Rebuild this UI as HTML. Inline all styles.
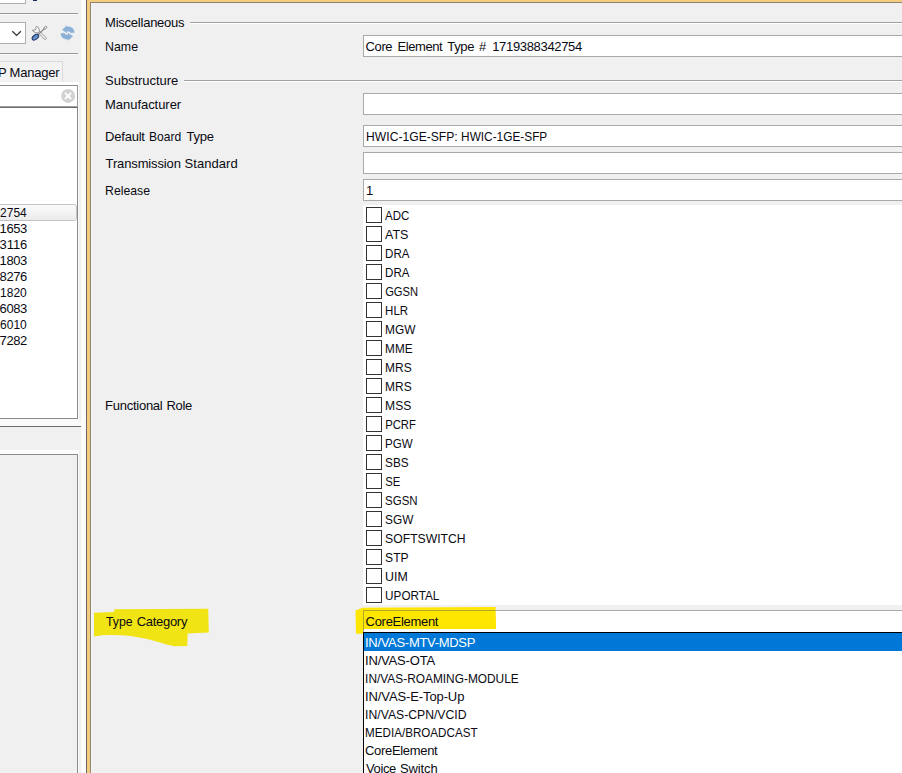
<!DOCTYPE html>
<html><head><meta charset="utf-8"><title>Core Element Type</title>
<style>
html,body{margin:0;padding:0;}
body{width:902px;height:773px;overflow:hidden;background:#f0f0f0;position:relative;font-family:"Liberation Sans",sans-serif;font-size:13px;color:#0a0a12;}
.a{position:absolute;}
.t{position:absolute;white-space:nowrap;line-height:16px;height:16px;}
.fld{position:absolute;left:363px;width:560px;height:20px;background:#fff;border:1px solid #a9a9a9;}
.hl{position:absolute;height:1px;background:#a0a0a0;}
.cb{position:absolute;left:366px;width:14px;height:14px;border:1px solid #333;background:#fff;}
</style></head><body>

<div class="a" style="left:0;top:0;width:26px;height:4px;background:#fff;border:1px solid #adadad;border-top:none;border-left:none;box-sizing:border-box"></div>
<div class="a" style="left:33px;top:0;width:4px;height:1px;background:#1b2b55"></div>
<div class="hl" style="left:0;top:13px;width:78px;background:#979797"></div><div class="hl" style="left:0;top:14px;width:78px;background:#fafafa"></div>
<div class="hl" style="left:0;top:53px;width:78px;background:#979797"></div><div class="hl" style="left:0;top:54px;width:78px;background:#fafafa"></div>
<div class="a" style="left:-5px;top:22px;width:29px;height:20px;background:#fff;border:1px solid #adadad"></div>
<svg class="a" style="left:10px;top:28px" width="14" height="10" viewBox="0 0 14 10"><path d="M2.3 3.2 L6.6 7.4 L10.9 3.2" fill="none" stroke="#333" stroke-width="1.3"/></svg>
<svg class="a" style="left:28px;top:22px" width="52" height="22" viewBox="28 22 52 22">
<path d="M38.3 32.6 L44.3 39.1 Q45.5 40 46.1 38.9 Q46.5 38.1 45.7 37.4 L39.8 31.2 Z" fill="#f8f8f8" stroke="#8c8c8c" stroke-width="0.9"/>
<path d="M32.3 30.4 L35.6 29.7 Q36.6 29 35.7 27.3 L36.5 26.3 Q38.4 27.2 39.3 29.5 Q39.8 31.8 38 33.1 Q35 33.4 32.3 30.4 Z" fill="#fbfbfb" stroke="#808080" stroke-width="0.9"/>
<path d="M44.5 28.7 L38.6 34.2" stroke="#787878" stroke-width="1.1" fill="none"/>
<ellipse cx="45.3" cy="27.8" rx="1.7" ry="1.1" transform="rotate(-45 45.3 27.8)" fill="#f4f4f4" stroke="#777" stroke-width="0.8"/>
<ellipse cx="35.4" cy="37.2" rx="3.7" ry="2.1" transform="rotate(-38 35.4 37.2)" fill="#6a90c8" stroke="#1b3468" stroke-width="1.1"/>
<g fill="#8bb0d7" stroke="#8bb0d7" stroke-width="0.5" stroke-linejoin="round">
<path d="M74.2 32.4 Q73.8 27.2 68.4 26.8 L66.8 27 L66.8 25.8 L62.4 29.8 L67 32.8 L66.9 31 Q70 30.6 70.8 32.8 Z"/>
<path d="M60.9 33.6 Q61.3 38.8 66.7 39.2 L68.3 39 L68.3 40.2 L72.7 36.2 L68.1 33.2 L68.2 35 Q65.1 35.4 64.3 33.2 Z"/>
</g></svg>
<div class="a" style="left:-3px;top:61px;width:66px;height:22px;background:#f2f2f2;border:1px solid #dadada;box-sizing:border-box"></div>
<div class="a" style="left:0;top:82px;width:79px;height:4px;background:#fff"></div>
<div class="a" style="left:-2px;top:85px;width:78px;height:20px;background:#fff;border:1px solid #9c9c9c;border-top-color:#8c8c8c;border-bottom:1px solid #a0a0a0"></div>
<svg class="a" style="left:61px;top:89px;overflow:visible" width="14" height="14" viewBox="0 0 14 14"><circle cx="7.1" cy="6.9" r="7" fill="#d2d2d2"/><path d="M4 3.8 L10.2 10 M10.2 3.8 L4 10" stroke="#fff" stroke-width="1.8"/></svg>
<div class="a" style="left:-2px;top:107px;width:78px;height:310px;background:#fff;border:1px solid #8a8a8a;border-top:1px solid #6c6c6c"></div>
<div class="a" style="left:0;top:419px;width:79px;height:3px;background:#f9f9f9"></div>
<div class="a" style="left:-4px;top:204px;width:79px;height:15px;border:1px solid #c4c4c4;border-radius:3px;background:linear-gradient(#fbfbfb,#ebebeb)"></div>
<div class="a" style="left:0;top:422px;width:82px;height:4px;background:#fafafa"></div>
<div class="hl" style="left:0;top:426px;width:82px;background:#6e6e6e"></div>
<div class="a" style="left:0;top:450px;width:79px;height:4px;background:#fcfcfc"></div>
<div class="a" style="left:-2px;top:454px;width:78px;height:340px;background:#f0f0f0;border:1px solid #8a8a8a"></div>
<div class="a" style="left:78px;top:86px;width:1px;height:333px;background:#fafafa"></div>
<div class="a" style="left:78px;top:454px;width:1px;height:319px;background:#fafafa"></div>
<div class="a" style="left:81px;top:0;width:5px;height:773px;background:#fafafa"></div>
<div class="a" style="left:82px;top:0;width:2px;height:773px;background:#fefefe"></div>
<div class="a" style="left:91px;top:3px;width:1px;height:770px;background:#f4f5f9"></div>
<div class="a" style="left:86px;top:0;width:1px;height:773px;background:#6a6a6a"></div>
<div class="a" style="left:87px;top:0;width:3px;height:773px;background:#f4cc7f"></div>
<div class="a" style="left:90px;top:2px;width:1px;height:771px;background:#90856e"></div>
<div class="a" style="left:87px;top:0;width:815px;height:2px;background:#f4cc7f"></div>
<div class="a" style="left:90px;top:2px;width:812px;height:1px;background:#90856e"></div>
<div class="hl" style="left:190px;top:22px;width:712px"></div><div class="hl" style="left:190px;top:23px;width:712px;background:#fff"></div>
<div class="hl" style="left:184px;top:80px;width:718px"></div><div class="hl" style="left:184px;top:81px;width:718px;background:#fff"></div>
<div class="fld" style="top:35px"></div>
<div class="fld" style="top:93px"></div>
<div class="fld" style="top:125px"></div>
<div class="fld" style="top:152px"></div>
<div class="fld" style="top:179px"></div>
<div class="a" style="left:363px;top:205px;width:560px;height:400px;background:#fff"></div>
<div class="cb" style="top:207px"></div>
<div class="cb" style="top:226px"></div>
<div class="cb" style="top:245px"></div>
<div class="cb" style="top:264px"></div>
<div class="cb" style="top:283px"></div>
<div class="cb" style="top:302px"></div>
<div class="cb" style="top:321px"></div>
<div class="cb" style="top:340px"></div>
<div class="cb" style="top:359px"></div>
<div class="cb" style="top:378px"></div>
<div class="cb" style="top:397px"></div>
<div class="cb" style="top:416px"></div>
<div class="cb" style="top:435px"></div>
<div class="cb" style="top:454px"></div>
<div class="cb" style="top:473px"></div>
<div class="cb" style="top:492px"></div>
<div class="cb" style="top:511px"></div>
<div class="cb" style="top:530px"></div>
<div class="cb" style="top:549px"></div>
<div class="cb" style="top:568px"></div>
<div class="cb" style="top:587px"></div>
<svg class="a" style="left:88px;top:600px" width="130" height="52" viewBox="88 600 130 52"><path d="M94 612.8 L114 611.9 L114.3 609.3 L208.2 608.8 L208.8 632.5 L187.6 633.4 L187.3 645.9 L174.5 646.2 Q166 644.5 160 642.5 Q145 638 131 636 Q117 634.6 102 635.3 L94 636.4 Z" fill="#f0e414"/></svg>
<svg class="a" style="left:345px;top:598px" width="160" height="44" viewBox="345 598 160 44"><path d="M355.5 610.6 L362.6 607.8 L495.5 606.9 L496.2 629.2 L364 630 L364 633.6 L356 633.8 Z" fill="#ffe600"/></svg>
<div class="a" style="left:363px;top:610px;width:560px;height:22px;border:1px solid #a9a9a9;border-bottom:none;box-sizing:border-box;background:linear-gradient(90deg,rgba(255,255,255,0) 0,rgba(255,255,255,0) 132px,#fff 132px)"></div>
<div class="a" style="left:364px;top:629px;width:560px;height:3px;background:#fff"></div>
<div class="a" style="left:363px;top:610px;width:133px;height:1px;background:#b0a830"></div>
<div class="a" style="left:363px;top:610px;width:1px;height:20px;background:#b0a830"></div>
<div class="a" style="left:363px;top:632px;width:560px;height:160px;background:#fff;border:1px solid #000;box-sizing:border-box"></div>
<div class="a" style="left:364px;top:633px;width:560px;height:18px;background:#0078d7"></div>
<div class="t" style="top:15px;left:105.1px;letter-spacing:-0.24px;">Miscellaneous</div>
<div class="t" style="top:39px;left:105.1px;transform:scaleX(0.9515);transform-origin:1px 0;">Name</div>
<div class="t" style="top:73px;left:105.1px;letter-spacing:-0.05px;">Substructure</div>
<div class="t" style="top:97px;left:105.1px;letter-spacing:-0.05px;">Manufacturer</div>
<div class="t" style="left:0;top:129px"><span class="t" style="top:0;left:105.1px;letter-spacing:-0.23px;">Default</span> <span class="t" style="top:0;left:149.3px;transform:scaleX(0.9273);transform-origin:1px 0;">Board</span> <span class="t" style="top:0;left:186.5px;letter-spacing:-0.27px;">Type</span></div>
<div class="t" style="left:0;top:156px"><span class="t" style="top:0;left:105.6px;letter-spacing:-0.14px;">Transmission</span> <span class="t" style="top:0;left:184.5px;letter-spacing:0.06px;">Standard</span></div>
<div class="t" style="top:183px;left:105.1px;transform:scaleX(0.9435);transform-origin:1px 0;">Release</div>
<div class="t" style="left:0;top:398px"><span class="t" style="top:0;left:105.1px;letter-spacing:-0.26px;">Functional</span> <span class="t" style="top:0;left:166.5px;letter-spacing:-0.37px;">Role</span></div>
<div class="t" style="left:0;top:614px"><span class="t" style="top:0;left:105.6px;transform:scaleX(0.9429);transform-origin:0px 0;">Type</span> <span class="t" style="top:0;left:136.7px;letter-spacing:-0.29px;">Category</span></div>
<div class="t" style="left:0;top:39px"><span class="t" style="top:0;left:365.5px;letter-spacing:-0.37px;">Core</span> <span class="t" style="top:0;left:397.4px;letter-spacing:-0.4px;">Element</span> <span class="t" style="top:0;left:447.2px;letter-spacing:-0.27px;">Type</span> <span class="t" style="top:0;left:479px;">#</span> <span class="t" style="top:0;left:492.2px;letter-spacing:-0.33px;">1719388342754</span></div>
<div class="t" style="left:0;top:129px"><span class="t" style="top:0;left:365.9px;transform:scaleX(0.9333);transform-origin:1px 0;">HWIC-1GE-SFP:</span> <span class="t" style="top:0;left:461.2px;transform:scaleX(0.9108);transform-origin:1px 0;">HWIC-1GE-SFP</span></div>
<div class="t" style="top:183px;left:366px;">1</div>
<div class="t" style="top:614px;left:365.6px;letter-spacing:-0.3px;">CoreElement</div>
<div class="t" style="top:208px;left:385.1px;transform:scaleX(0.8852);transform-origin:0px 0;">ADC</div>
<div class="t" style="top:227px;left:385.1px;transform:scaleX(0.9625);transform-origin:0px 0;">ATS</div>
<div class="t" style="top:246px;left:384.6px;transform:scaleX(0.8885);transform-origin:1px 0;">DRA</div>
<div class="t" style="top:265px;left:384.6px;transform:scaleX(0.8885);transform-origin:1px 0;">DRA</div>
<div class="t" style="top:284px;left:384.6px;transform:scaleX(0.8583);transform-origin:1px 0;">GGSN</div>
<div class="t" style="top:303px;left:384.6px;transform:scaleX(0.8833);transform-origin:1px 0;">HLR</div>
<div class="t" style="top:322px;left:384.6px;transform:scaleX(0.9156);transform-origin:1px 0;">MGW</div>
<div class="t" style="top:341px;left:384.6px;transform:scaleX(0.9034);transform-origin:1px 0;">MME</div>
<div class="t" style="top:360px;left:384.6px;transform:scaleX(0.9185);transform-origin:1px 0;">MRS</div>
<div class="t" style="top:379px;left:384.6px;transform:scaleX(0.9185);transform-origin:1px 0;">MRS</div>
<div class="t" style="top:398px;left:384.6px;transform:scaleX(0.9296);transform-origin:1px 0;">MSS</div>
<div class="t" style="top:417px;left:384.6px;transform:scaleX(0.8676);transform-origin:1px 0;">PCRF</div>
<div class="t" style="top:436px;left:384.6px;transform:scaleX(0.89);transform-origin:1px 0;">PGW</div>
<div class="t" style="top:455px;left:384.6px;transform:scaleX(0.9042);transform-origin:1px 0;">SBS</div>
<div class="t" style="top:474px;left:384.6px;transform:scaleX(0.8687);transform-origin:1px 0;">SE</div>
<div class="t" style="top:493px;left:384.6px;transform:scaleX(0.8829);transform-origin:1px 0;">SGSN</div>
<div class="t" style="top:512px;left:384.6px;transform:scaleX(0.91);transform-origin:1px 0;">SGW</div>
<div class="t" style="top:531px;left:384.6px;transform:scaleX(0.9381);transform-origin:1px 0;">SOFTSWITCH</div>
<div class="t" style="top:550px;left:384.6px;transform:scaleX(0.9292);transform-origin:1px 0;">STP</div>
<div class="t" style="top:569px;left:384.6px;transform:scaleX(0.95);transform-origin:1px 0;">UIM</div>
<div class="t" style="top:588px;left:384.6px;transform:scaleX(0.9017);transform-origin:1px 0;">UPORTAL</div>
<div class="t" style="top:635px;left:365px;letter-spacing:-0.3px;color:#fff;">IN/VAS-MTV-MDSP</div>
<div class="t" style="top:653px;left:365px;letter-spacing:-0.18px;">IN/VAS-OTA</div>
<div class="t" style="top:671px;left:365px;transform:scaleX(0.9144);transform-origin:1px 0;">IN/VAS-ROAMING-MODULE</div>
<div class="t" style="top:689px;left:365px;letter-spacing:-0.11px;">IN/VAS-E-Top-Up</div>
<div class="t" style="top:707px;left:365px;transform:scaleX(0.9383);transform-origin:1px 0;">IN/VAS-CPN/VCID</div>
<div class="t" style="top:725px;left:365px;transform:scaleX(0.8944);transform-origin:1px 0;">MEDIA/BROADCAST</div>
<div class="t" style="top:743px;left:365px;letter-spacing:-0.32px;">CoreElement</div>
<div class="t" style="left:0;top:761px"><span class="t" style="top:0;left:366px;letter-spacing:-0.38px;">Voice</span> <span class="t" style="top:0;left:399.9px;letter-spacing:-0.1px;">Switch</span></div>
<div class="t" style="top:205px;left:-0.4px;transform:scaleX(0.9214);transform-origin:1px 0;">2754</div>
<div class="t" style="top:221px;left:-0.4px;letter-spacing:-0.4px;">1653</div>
<div class="t" style="top:237px;left:-0.4px;letter-spacing:-0.07px;">3116</div>
<div class="t" style="top:253px;left:-0.4px;letter-spacing:-0.4px;">1803</div>
<div class="t" style="top:269px;left:-0.4px;letter-spacing:-0.4px;">8276</div>
<div class="t" style="top:285px;left:-0.4px;transform:scaleX(0.9214);transform-origin:1px 0;">1820</div>
<div class="t" style="top:301px;left:-0.4px;letter-spacing:-0.4px;">6083</div>
<div class="t" style="top:317px;left:-0.4px;transform:scaleX(0.9214);transform-origin:1px 0;">6010</div>
<div class="t" style="top:333px;left:-0.4px;letter-spacing:-0.4px;">7282</div>
<div class="t" style="top:65px;left:9.6px;letter-spacing:-0.2px;"><span style="position:absolute;right:100%;margin-right:3px">P </span>Manager</div>
</body></html>
